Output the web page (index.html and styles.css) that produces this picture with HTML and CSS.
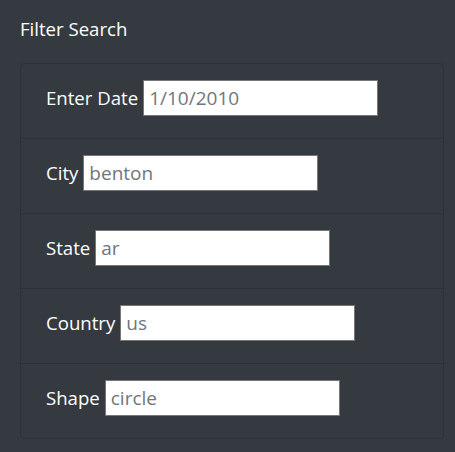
FILE: index.html
```html
<!DOCTYPE html>
<html>
<head>
<meta charset="utf-8">
<link rel="stylesheet" href="styles.css">
</head>
<body>
<div class="panel">
  <h5 class="title">Filter Search</h5>
  <ul class="filters">
    <li class="filter-item"><label for="datetime">Enter Date</label><input id="datetime" type="text" placeholder="1/10/2010"></li>
    <li class="filter-item"><label for="city">City</label><input id="city" type="text" placeholder="benton"></li>
    <li class="filter-item"><label for="state">State</label><input id="state" type="text" placeholder="ar"></li>
    <li class="filter-item"><label for="country">Country</label><input id="country" type="text" placeholder="us"></li>
    <li class="filter-item"><label for="shape">Shape</label><input id="shape" type="text" placeholder="circle"></li>
  </ul>
</div>
</body>
</html>
```

FILE: styles.css
```css
html, body {
  margin: 0;
  padding: 0;
  background: #343a40;
  height: 100%;
}
body {
  font-family: "Open Sans", "Noto Sans", sans-serif;
  color: #fff;
}
.panel {
  padding: 14px 0 0 20px;
}
.title {
  margin: 0 0 20px 0;
  font-size: 18.6px;
  font-weight: 400;
  line-height: 29px;
}
.filters {
  list-style: none;
  margin: 0;
  padding: 0;
  width: 424px;
  box-sizing: border-box;
  border: 1px solid #2d3237;
  border-radius: 4px;
}
.filter-item {
  display: flex;
  align-items: center;
  gap: 5px;
  padding: 16px 25px 22px 25px;
  border-bottom: 1px solid #2d3237;
  font-size: 18.6px;
  line-height: 26px;
}
.filter-item:last-child {
  border-bottom: none;
}
.filter-item input {
  width: 235px;
  height: 36px;
  box-sizing: border-box;
  border: 1px solid #767676;
  background: #fff;
  padding: 1px 5px;
  font-family: inherit;
  font-size: 19px;
  margin: 0;
}
.filter-item input::placeholder {
  color: #6f767c;
  opacity: 1;
}
```
